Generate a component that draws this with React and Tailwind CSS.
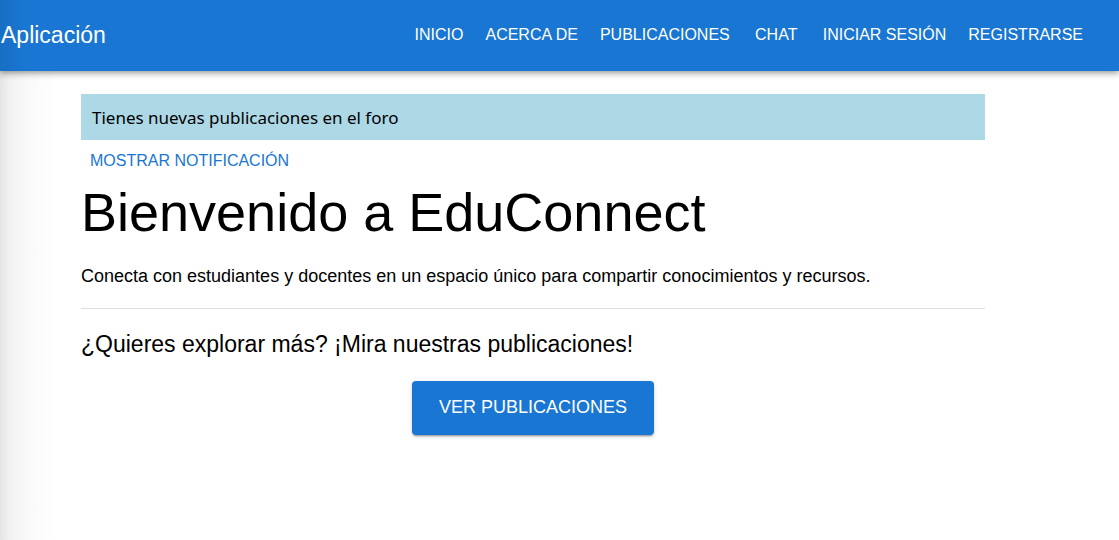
const links = [
  ['Inicio', '#inicio'],
  ['Acerca de', '#acerca'],
  ['Publicaciones', '#publicaciones'],
  ['Chat', '#chat'],
  ['Iniciar sesión', '#iniciar-sesion'],
  ['Registrarse', '#registrarse'],
];

export default function App() {
  return (
    <div className="min-h-screen bg-white bg-[linear-gradient(to_right,#e4e4e4_0px,#f2f2f2_10px,#fafafa_30px,#ffffff_56px)] font-['Liberation_Sans',Arial,sans-serif] text-black">
      <header className="flex h-[71px] items-center justify-between bg-[#1976d2] bg-[linear-gradient(to_right,#186fc5,#1976d2_24px)] pb-[2px] pl-px pr-[25px] text-white shadow-[0_2px_4px_-1px_rgba(0,0,0,0.2),0_4px_5px_0_rgba(0,0,0,0.14),0_1px_10px_0_rgba(0,0,0,0.12)]">
        <span className="text-[23px] leading-[36px]">Aplicación</span>
        <nav className="flex items-center">
          {links.map(([label, href]) => (
            <a key={href} href={href} className="flex min-w-[71px] justify-center px-[11px] text-base uppercase">
              {label}
            </a>
          ))}
        </nav>
      </header>
      <main className="ml-[81px] mr-[134px] flex flex-col items-start pt-[23px]">
        <div role="status" className="w-full bg-[#add8e6] px-[11px] pb-[9px] pt-[11px] font-['Noto_Sans',sans-serif] text-[17px] leading-[26px]">
          Tienes nuevas publicaciones en el foro
        </div>
        <button type="button" className="px-[9px] pb-[7px] pt-[9px] text-base uppercase text-[#1976d2]">
          Mostrar notificación
        </button>
        <h1 className="text-[54px] leading-[64px]">Bienvenido a EduConnect</h1>
        <p className="mt-[18px] text-[18px] leading-[28px]">
          Conecta con estudiantes y docentes en un espacio único para compartir conocimientos y recursos.
        </p>
        <hr className="mt-[18px] w-full border-[#e0e0e0]" />
        <h2 className="mt-[17px] text-[23px] leading-[36px]">¿Quieres explorar más? ¡Mira nuestras publicaciones!</h2>
        <a
          href="#publicaciones"
          className="mt-[19px] self-center rounded-[4px] bg-[#1976d2] px-[27px] pb-[14px] pt-[12px] text-[18px] leading-[28px] uppercase text-white shadow-[0_3px_1px_-2px_rgba(0,0,0,0.2),0_2px_2px_0_rgba(0,0,0,0.14),0_1px_5px_0_rgba(0,0,0,0.12)]"
        >
          Ver publicaciones
        </a>
      </main>
    </div>
  );
}
